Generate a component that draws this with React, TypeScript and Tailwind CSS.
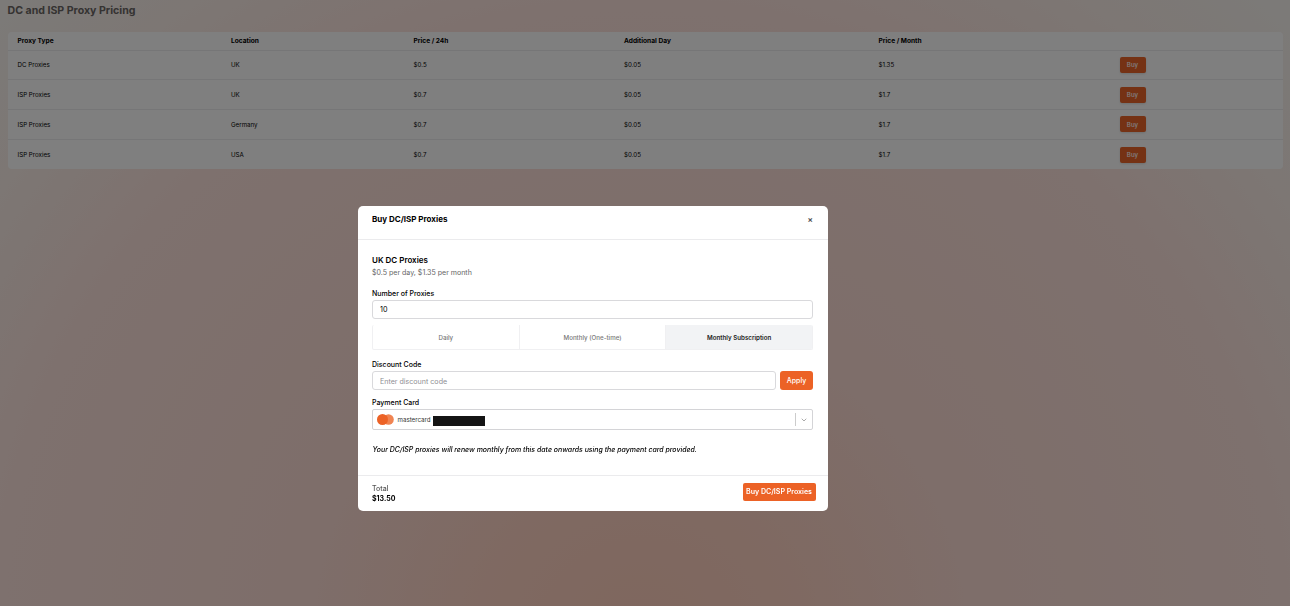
import React, { useState } from 'react';
import { ChevronDown } from 'lucide-react';

interface ProxyPlan {
    type: string;
    location: string;
    day: string;
    additional: string;
    month: string;
}

const plans: ProxyPlan[] = [
    { type: 'DC Proxies', location: 'UK', day: '$0.5', additional: '$0.05', month: '$1.35' },
    { type: 'ISP Proxies', location: 'UK', day: '$0.7', additional: '$0.05', month: '$1.7' },
    { type: 'ISP Proxies', location: 'Germany', day: '$0.7', additional: '$0.05', month: '$1.7' },
    { type: 'ISP Proxies', location: 'USA', day: '$0.7', additional: '$0.05', month: '$1.7' },
];

const periods = ['Daily', 'Monthly (One-time)', 'Monthly Subscription'];

const PricingTable: React.FC = () => (
    <div className="h-[137px] overflow-hidden rounded-[4px] bg-white">
        <table className="w-full table-fixed text-left text-[6.2px] leading-[8px] text-black">
            <colgroup>
                <col className="w-[213.5px]" />
                <col className="w-[182.5px]" />
                <col className="w-[210.5px]" />
                <col className="w-[254.5px]" />
                <col className="w-[240.5px]" />
                <col />
            </colgroup>
            <thead>
                <tr className="h-[18px] border-b border-[#ececee] text-[6.6px] font-bold">
                    <th className="pl-[10px]">Proxy Type</th>
                    <th className="pl-[10px]">Location</th>
                    <th className="pl-[10px]">Price / 24h</th>
                    <th className="pl-[10px]">Additional Day</th>
                    <th className="pl-[10px]">Price / Month</th>
                    <th />
                </tr>
            </thead>
            <tbody>
                {plans.map((plan, i) => (
                    <tr key={i} className="h-[29.8px] border-b border-[#ececee] last:border-b-0">
                        <td className="pt-px pl-[10px]">{plan.type}</td>
                        <td className="pt-px pl-[10px]">{plan.location}</td>
                        <td className="pt-px pl-[10px]">{plan.day}</td>
                        <td className="pt-px pl-[10px]">{plan.additional}</td>
                        <td className="pt-px pl-[10px]">{plan.month}</td>
                        <td className="pl-[10.5px]">
                            <button className="block h-[16px] w-[26px] rounded-[2px] bg-[#ea6529] pt-px text-center text-[6.2px] font-medium text-white shadow-sm">
                                Buy
                            </button>
                        </td>
                    </tr>
                ))}
            </tbody>
        </table>
    </div>
);

const BuyModal: React.FC = () => {
    const [period, setPeriod] = useState('Monthly Subscription');
    const [amount, setAmount] = useState('10');

    return (
        <div className="fixed inset-0 bg-black/50 pt-[206px] pl-[357.5px]">
            <div className="flex h-[305px] w-[470px] flex-col rounded-[5px] bg-white text-black">
                {/* Header */}
                <div className="flex h-[34px] shrink-0 items-start justify-between border-b border-[#ebebed] px-[14.5px] pt-[8px]">
                    <h2 className="text-[8px] leading-[11px] font-bold">Buy DC/ISP Proxies</h2>
                    <button className="pt-px text-[8px] leading-[11px] font-bold text-[#555]">×</button>
                </div>

                {/* Body */}
                <div className="flex-1 px-[14.5px] pt-[15px]">
                    <h3 className="text-[8px] leading-[11px] font-semibold">UK DC Proxies</h3>
                    <p className="pt-px text-[7.05px] leading-[11px] text-[#666]">$0.5 per day, $1.35 per month</p>

                    <label className="mt-[10px] block text-[7px] leading-[11px] font-medium">Number of Proxies</label>
                    <input
                        type="text"
                        value={amount}
                        onChange={(e) => setAmount(e.target.value)}
                        className="mt-[1px] block h-[19px] w-full rounded-[3px] border border-[#d9d9dc] px-[7px] text-[7.2px] focus:outline-none"
                    />

                    <div className="mt-[6px] flex h-[25px] divide-x divide-[#f0f0f2] overflow-hidden rounded-[2px] border border-t-0 border-[#f0f0f2]">
                        {periods.map((p) => (
                            <button
                                key={p}
                                onClick={() => setPeriod(p)}
                                className={
                                    p === period
                                        ? 'flex-1 bg-[#f2f3f5] pt-px text-[6.2px] font-semibold text-[#222]'
                                        : 'flex-1 pt-px text-[6.2px] font-medium text-[#777]'
                                }
                            >
                                {p}
                            </button>
                        ))}
                    </div>

                    <label className="mt-[9px] block text-[7px] leading-[11px] font-medium">Discount Code</label>
                    <div className="mt-[1px] flex gap-[4px]">
                        <input
                            type="text"
                            placeholder="Enter discount code"
                            className="block h-[19px] min-w-0 flex-1 rounded-[3px] border border-[#d9d9dc] px-[7px] pt-px text-[7.1px] placeholder:text-[#8e8e93] focus:outline-none"
                        />
                        <button className="h-[19px] w-[33px] rounded-[3px] bg-[#ec6226] pt-px text-[7px] font-medium text-white">Apply</button>
                    </div>

                    <label className="mt-[7px] block text-[7px] leading-[11px] font-medium">Payment Card</label>
                    <div className="mt-[1px] flex h-[21px] items-center rounded-[2px] border border-[#d4d4d7] pl-[4px]">
                        <svg className="h-[11px] w-[17px]" viewBox="0 0 17 11">
                            <circle cx="11.5" cy="5.5" r="5.3" fill="#f08452" />
                            <circle cx="5.5" cy="5.5" r="5.5" fill="#ec6226" />
                        </svg>
                        <span className="ml-[3.5px] text-[6.2px] text-[#333]">mastercard</span>
                        <span className="mt-[2px] ml-[2.5px] h-[10px] w-[52px] bg-[#141414]" />
                        <span className="ml-auto h-[13px] w-px bg-[#ccc]" />
                        <ChevronDown className="mr-[4px] ml-[4px] size-[8px] text-[#aaa]" strokeWidth={3} />
                    </div>

                    <p className="mt-[14px] pl-[0.5px] text-[6.97px] leading-[11px] font-medium italic">
                        Your DC/ISP proxies will renew monthly from this date onwards using the payment card provided.
                    </p>
                </div>

                {/* Footer */}
                <div className="flex h-[36px] shrink-0 justify-between border-t border-[#ebebed] pt-[7px] pr-[12px] pl-[14.5px]">
                    <div className="pt-px text-[7px] leading-[10px]">
                        <p className="font-medium text-[#555]">Total</p>
                        <p className="font-bold">$13.50</p>
                    </div>
                    <button className="h-[18px] w-[73px] rounded-[2px] bg-[#ec6226] pt-px text-[7.05px] font-semibold whitespace-nowrap text-white">
                        Buy DC/ISP Proxies
                    </button>
                </div>
            </div>
        </div>
    );
};

const App: React.FC = () => {
    return (
        <div className="h-[606px] overflow-hidden bg-[radial-gradient(ellipse_910px_900px_at_640px_640px,#fecebc_0%,#fed3c4_18%,#fddcd4_36%,#fde2dc_70%,#faeee8_86%,#f8f5f1_100%)] px-[7.5px] pt-[2px] font-['Inter',sans-serif]">
            <h1 className="mb-[13px] h-[17px] text-[10.6px] leading-[17px] font-bold text-[#6a6664]">DC and ISP Proxy Pricing</h1>
            <PricingTable />
            <BuyModal />
        </div>
    );
};

export default App;
